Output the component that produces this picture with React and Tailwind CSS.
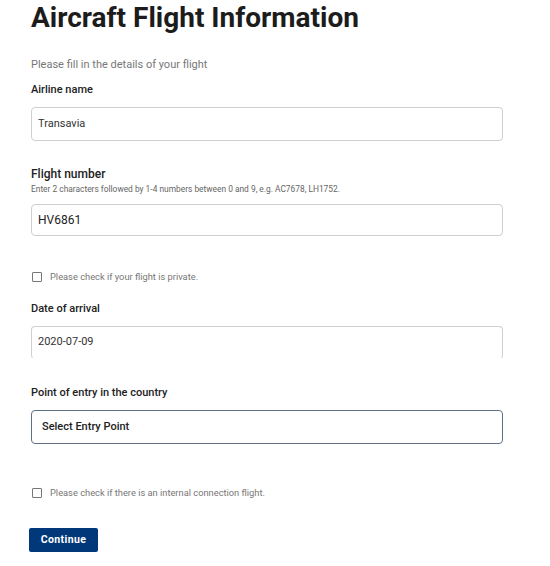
import React, { useState } from 'react';

function Label({ children, className = '' }) {
  return (
    <div className={`text-[11px] leading-[14px] font-medium text-[#222] ${className}`}>{children}</div>
  );
}

function CheckRow({ text, className = '' }) {
  const [checked, setChecked] = useState(false);
  return (
    <label className={`flex items-center gap-[8px] pl-[1px] h-[14px] ${className}`}>
      <span
        onClick={() => setChecked(!checked)}
        className="w-[10px] h-[10px] border border-[#777] rounded-[1px] bg-white flex-shrink-0"
      />
      <span className="text-[9.3px] leading-[14px] text-[#777]">{text}</span>
    </label>
  );
}

export default function App() {
  return (
    <div className="min-h-screen bg-white pl-[31px] pr-[47px] pb-10" style={{ fontFamily: 'Roboto, "Liberation Sans", sans-serif' }}>
      <h1 className="text-[28px] leading-[36px] font-bold text-[#1c1c1c]">Aircraft Flight Information</h1>

      <p className="mt-[22px] text-[11px] leading-[14px] text-[#777]">Please fill in the details of your flight</p>

      <Label className="mt-[11px]">Airline name</Label>
      <div className="mt-[10px] h-[34px] border border-[#cfcfcf] rounded-[4px] flex items-center px-[6px] text-[11px] text-[#333]">
        Transavia
      </div>

      <div className="mt-[25px] text-[12px] leading-[16px] font-medium text-[#222]">Flight number</div>
      <div className="mt-[2px] text-[8.4px] leading-[10px] text-[#666]">
        Enter 2 characters followed by 1-4 numbers between 0 and 9, e.g. AC7678, LH1752.
      </div>
      <div className="mt-[10px] h-[32px] border border-[#cfcfcf] rounded-[4px] flex items-center px-[6px] text-[12px] text-[#222]">
        HV6861
      </div>

      <CheckRow className="mt-[34px]" text="Please check if your flight is private." />

      <Label className="mt-[18px]">Date of arrival</Label>
      <div className="mt-[10px] h-[33px] border border-[#cfcfcf] border-b-transparent rounded-[4px] flex items-center px-[6px] text-[11px] text-[#333]">
        2020-07-09
      </div>

      <Label className="mt-[27px]">Point of entry in the country</Label>
      <div className="mt-[10px] h-[34px] border border-[#5f7088] rounded-[4px] flex items-center px-[10px] text-[11px] font-medium text-[#222]">
        Select Entry Point
      </div>

      <CheckRow className="mt-[42px]" text="Please check if there is an internal connection flight." />

      <button className="mt-[28px] -ml-[2px] w-[69px] h-[24px] rounded-[2px] bg-[#00387a] text-white text-[10.5px] font-bold tracking-[0.4px] flex items-center justify-center">
        Continue
      </button>
    </div>
  );
}
